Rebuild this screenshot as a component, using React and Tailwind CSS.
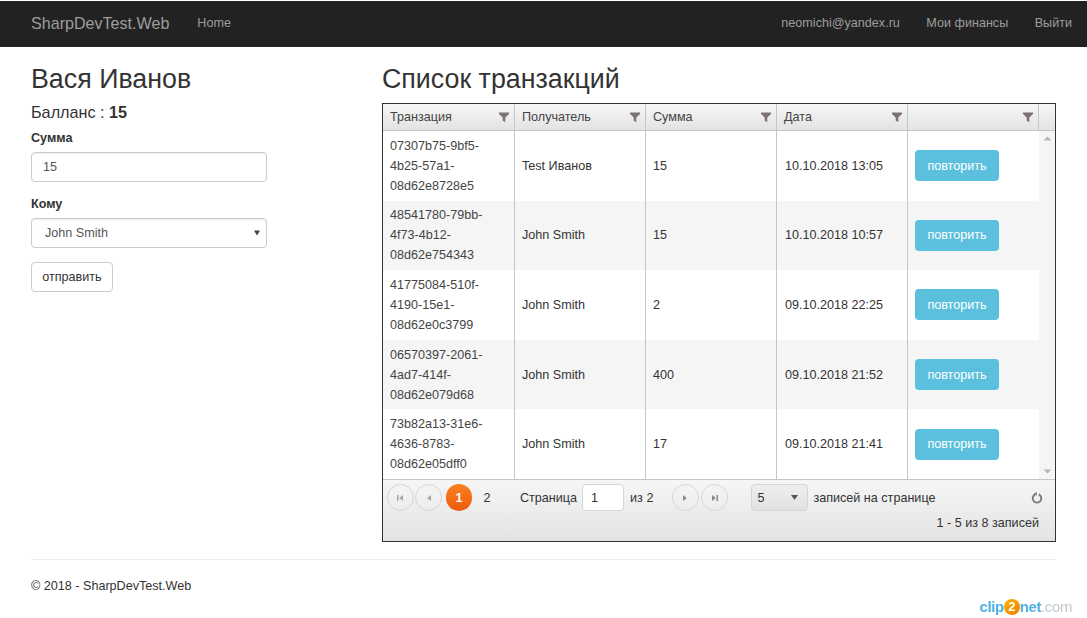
import React from 'react';

const transactions = [
  { id: ['07307b75-9bf5-', '4b25-57a1-', '08d62e8728e5'], to: 'Test Иванов', sum: '15', date: '10.10.2018 13:05' },
  { id: ['48541780-79bb-', '4f73-4b12-', '08d62e754343'], to: 'John Smith', sum: '15', date: '10.10.2018 10:57' },
  { id: ['41775084-510f-', '4190-15e1-', '08d62e0c3799'], to: 'John Smith', sum: '2', date: '09.10.2018 22:25' },
  { id: ['06570397-2061-', '4ad7-414f-', '08d62e079d68'], to: 'John Smith', sum: '400', date: '09.10.2018 21:52' },
  { id: ['73b82a13-31e6-', '4636-8783-', '08d62e05dff0'], to: 'John Smith', sum: '17', date: '09.10.2018 21:41' },
];

const FilterIcon = () => (
  <svg width="10" height="10" viewBox="0 0 10 10" className="shrink-0">
    <path d="M0 0.5h10v1.6L6.3 5.4V10L3.7 8.8V5.4L0 2.1z" fill="#7a7370" />
  </svg>
);

const HeaderCell = ({ title }) => (
  <div className="flex items-center justify-between pl-[7px] pr-[5px] border-r border-[#c5c5c5]">
    <span>{title}</span>
    <FilterIcon />
  </div>
);

const PagerArrow = ({ dir, bar }) => (
  <button className="flex h-[27px] w-[27px] items-center justify-center rounded-full border border-[#d5d5d5]">
    <svg width="9" height="8" viewBox="0 0 9 8">
      {dir === 'left' ? (
        <>
          {bar && <rect x="1" y="1" width="1.5" height="6" fill="#a5a5a5" />}
          <path d="M7 1v6L3.2 4z" fill="#a5a5a5" />
        </>
      ) : (
        <>
          <path d="M2 1v6l3.8-3z" fill="#8a8a8a" />
          {bar && <rect x="6.5" y="1" width="1.5" height="6" fill="#8a8a8a" />}
        </>
      )}
    </svg>
  </button>
);

export default function App() {
  return (
    <div className="relative h-[618px] overflow-hidden bg-white pt-px font-['Liberation_Sans',Arial,sans-serif] text-[12.6px] leading-5 text-[#333]">
      {/* Navbar */}
      <nav className="flex h-[46px] items-center bg-[#222] pl-[31px] pr-[15px] text-[#9d9d9d]">
        <span className="text-[16.1px] -mt-[3px]">SharpDevTest.Web</span>
        <span className="ml-[28px] -mt-[2px]">Home</span>
        <div className="ml-auto flex gap-[26.5px] -mt-[2px]">
          <span>neomichi@yandex.ru</span>
          <span>Мои финансы</span>
          <span>Выйти</span>
        </div>
      </nav>

      <div className="mx-[31px] flex">
        {/* Form */}
        <div className="w-[351px] shrink-0">
          <h2 className="mt-[16px] text-[26.8px] leading-[32px] text-[#333]">Вася Иванов</h2>
          <p className="mt-[8px] text-[16.2px] leading-[18px]">
            Балланс : <b>15</b>
          </p>
          <label className="mt-[7px] block font-bold leading-5">Сумма</label>
          <input
            readOnly
            value="15"
            className="mt-[4px] block h-[30px] w-[236px] rounded border border-[#ccc] px-[11px] text-[#555] shadow-[inset_0_1px_1px_rgba(0,0,0,0.075)] outline-none"
          />
          <label className="mt-[12px] block font-bold leading-5">Кому</label>
          <div className="mt-[4px] flex h-[30px] w-[236px] items-center justify-between rounded border border-[#ccc] pl-[13px] pr-[5px] text-[#555] shadow-[inset_0_1px_1px_rgba(0,0,0,0.075)]">
            <span>John Smith</span>
            <svg width="8" height="6" viewBox="0 0 8 6"><path d="M1 0.5h6L4 5.5z" fill="#444" /></svg>
          </div>
          <button className="mt-[14px] block h-[30px] w-[82px] rounded border border-[#ccc] bg-white text-[#333]">отправить</button>
        </div>

        {/* Transactions */}
        <div className="w-[674px] shrink-0">
          <h2 className="mt-[16px] text-[26.8px] leading-[32px] text-[#333]">Список транзакций</h2>
          <div className="mt-[8px] h-[439px] border border-[#333] text-[#333]">
            <div className="grid h-[27px] grid-cols-[132px_131px_131px_131px_131px_1fr] border-b border-[#c5c5c5] bg-gradient-to-b from-[#f6f6f6] to-[#e3e3e3] leading-[25px] text-[#444]">
              <HeaderCell title="Транзация" />
              <HeaderCell title="Получатель" />
              <HeaderCell title="Сумма" />
              <HeaderCell title="Дата" />
              <HeaderCell title="" />
              <div />
            </div>
            <div className="flex h-[348px]">
              <div className="w-[656px] shrink-0">
                {transactions.map((t, i) => (
                  <div
                    key={t.id[2]}
                    className={`grid h-[69.6px] grid-cols-[132px_131px_131px_131px_1fr] items-stretch ${i % 2 ? 'bg-[#f5f5f5]' : 'bg-white'}`}
                  >
                    <div className="flex flex-col justify-center border-r border-[#c5c5c5] pl-[7px] text-[#444]">
                      {t.id.map((line) => <span key={line}>{line}</span>)}
                    </div>
                    <div className="flex items-center border-r border-[#c5c5c5] pl-[7px]">{t.to}</div>
                    <div className="flex items-center border-r border-[#c5c5c5] pl-[7px]">{t.sum}</div>
                    <div className="flex items-center border-r border-[#c5c5c5] pl-2">{t.date}</div>
                    <div className="flex items-center pl-[7px]">
                      <button className="h-[31px] w-[84px] rounded bg-[#5bc0de] text-white">повторить</button>
                    </div>
                  </div>
                ))}
              </div>
              <div className="flex flex-1 flex-col items-center justify-between bg-[#f5f5f5] py-[5px]">
                <svg width="9" height="5" viewBox="0 0 9 5"><path d="M0.5 4.5h8L4.5 0.5z" fill="#b5b5b5" /></svg>
                <svg width="9" height="5" viewBox="0 0 9 5"><path d="M0.5 0.5h8l-4 4z" fill="#b5b5b5" /></svg>
              </div>
            </div>
            {/* Pager */}
            <div className="h-[62px] border-t border-[#c5c5c5] bg-gradient-to-b from-[#f6f6f6] to-[#e3e3e3] pl-[4px] pr-[16px] pt-[4px]">
              <div className="flex h-[27px] items-center">
                <div className="flex gap-[1px]">
                  <PagerArrow dir="left" bar />
                  <PagerArrow dir="left" />
                </div>
                <span className="ml-[4px] flex h-[27px] w-[26px] items-center justify-center rounded-full bg-gradient-to-b from-[#f9801f] to-[#ec5a0c] font-bold text-white">1</span>
                <span className="ml-[6px] w-[18px] text-center">2</span>
                <span className="ml-[24px]">Страница</span>
                <span className="ml-[5px] flex h-[27px] w-[42px] items-center rounded border border-[#d5d5d5] bg-white pl-[8px]">1</span>
                <span className="ml-[6px]">из 2</span>
                <div className="ml-[19px] flex gap-[2px]">
                  <PagerArrow dir="right" />
                  <PagerArrow dir="right" bar />
                </div>
                <div className="ml-[23px] flex h-[27px] w-[57px] items-center justify-between rounded border border-[#d5d5d5] bg-gradient-to-b from-[#eee] to-[#e2e2e2] pl-[5px] pr-[9px]">
                  <span>5</span>
                  <svg width="7" height="5" viewBox="0 0 7 5"><path d="M0 0h7L3.5 5z" fill="#555" /></svg>
                </div>
                <span className="ml-[5px]">записей на странице</span>
                <svg width="12" height="12" viewBox="0 0 12 12" fill="none" className="ml-auto -mr-[4px]">
                  <path d="M7.8 2.4a4.3 4.3 0 1 1-3.6 0" stroke="#7d7672" strokeWidth="1.9" />
                  <path d="M5.8 0v3.8L3 1.6z" fill="#7d7672" />
                </svg>
              </div>
              <div className="mt-[2px] text-right">1 - 5 из 8 записей</div>
            </div>
          </div>
        </div>
      </div>

      {/* Footer */}
      <footer className="mx-[31px] mt-[17px] border-t border-[#eee] pt-[16px]">
        <p>© 2018 - SharpDevTest.Web</p>
      </footer>

      {/* Watermark */}
      <div className="absolute right-[15px] top-[597px] flex items-center text-[15px] font-bold leading-5 tracking-[-0.4px] blur-[0.4px]">
        <span className="text-[#4fb0e6]">clip</span>
        <span className="flex h-[16px] w-[16px] items-center justify-center rounded-full bg-gradient-to-br from-[#f7b500] to-[#ef7d00] text-[13px] text-white">2</span>
        <span className="text-[#4fb0e6]">net</span>
        <span className="font-normal text-[#c4c8cc]">.com</span>
      </div>
    </div>
  );
}
